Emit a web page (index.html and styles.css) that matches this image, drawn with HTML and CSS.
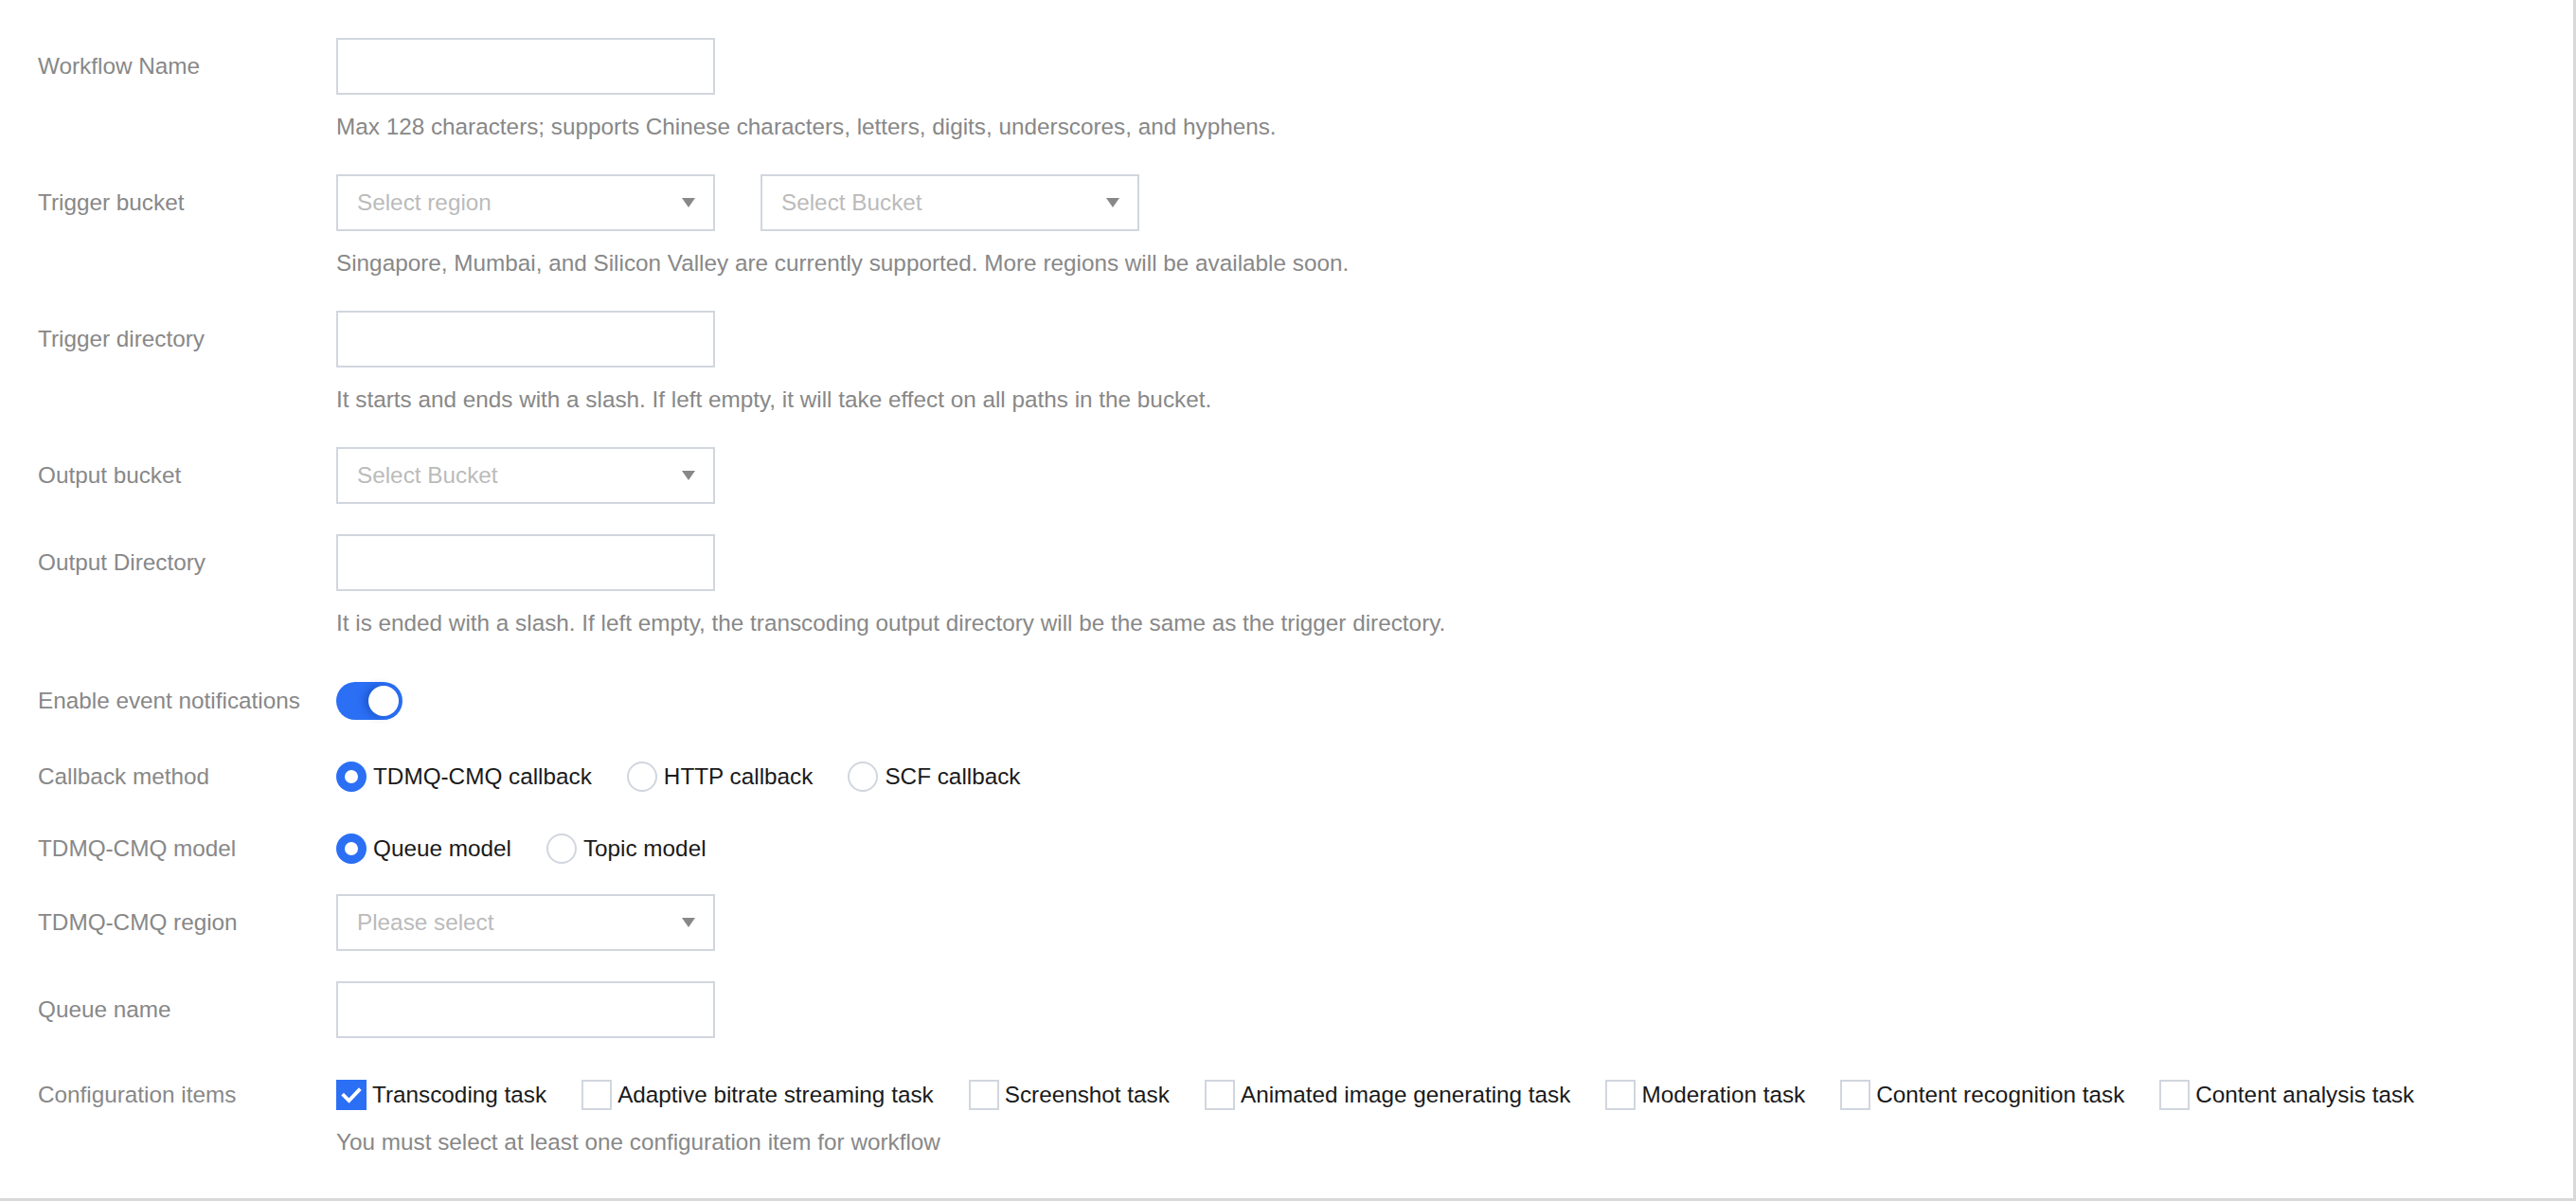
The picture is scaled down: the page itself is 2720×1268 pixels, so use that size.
FILE: index.html
```html
<!DOCTYPE html>
<html>
<head>
<meta charset="utf-8">
<link rel="stylesheet" href="styles.css">
</head>
<body>
<div class="page">
  <div class="form">
    <div class="item">
      <div class="label">Workflow Name</div>
      <div class="ctrl">
        <div class="line"><div class="input"></div></div>
        <div class="help">Max 128 characters; supports Chinese characters, letters, digits, underscores, and hyphens.</div>
      </div>
    </div>
    <div class="item">
      <div class="label">Trigger bucket</div>
      <div class="ctrl">
        <div class="line">
          <div class="input select"><span class="ph">Select region</span><span class="caret"></span></div>
          <div class="input select"><span class="ph">Select Bucket</span><span class="caret"></span></div>
        </div>
        <div class="help">Singapore, Mumbai, and Silicon Valley are currently supported. More regions will be available soon.</div>
      </div>
    </div>
    <div class="item">
      <div class="label">Trigger directory</div>
      <div class="ctrl">
        <div class="line"><div class="input"></div></div>
        <div class="help">It starts and ends with a slash. If left empty, it will take effect on all paths in the bucket.</div>
      </div>
    </div>
    <div class="item">
      <div class="label">Output bucket</div>
      <div class="ctrl">
        <div class="line"><div class="input select"><span class="ph">Select Bucket</span><span class="caret"></span></div></div>
      </div>
    </div>
    <div class="item">
      <div class="label">Output Directory</div>
      <div class="ctrl">
        <div class="line"><div class="input"></div></div>
        <div class="help">It is ended with a slash. If left empty, the transcoding output directory will be the same as the trigger directory.</div>
      </div>
    </div>
    <div class="item is-text is-switch">
      <div class="label">Enable event notifications</div>
      <div class="ctrl text-ctrl">
        <div class="switch"><span class="knob"></span></div>
      </div>
    </div>
    <div class="item is-text">
      <div class="label">Callback method</div>
      <div class="ctrl text-ctrl">
        <div class="choices">
          <label class="choice"><span class="radio checked"></span>TDMQ-CMQ callback</label>
          <label class="choice"><span class="radio"></span>HTTP callback</label>
          <label class="choice"><span class="radio"></span>SCF callback</label>
        </div>
      </div>
    </div>
    <div class="item is-text">
      <div class="label">TDMQ-CMQ model</div>
      <div class="ctrl text-ctrl">
        <div class="choices">
          <label class="choice"><span class="radio checked"></span>Queue model</label>
          <label class="choice"><span class="radio"></span>Topic model</label>
        </div>
      </div>
    </div>
    <div class="item">
      <div class="label">TDMQ-CMQ region</div>
      <div class="ctrl">
        <div class="line"><div class="input select"><span class="ph">Please select</span><span class="caret"></span></div></div>
      </div>
    </div>
    <div class="item">
      <div class="label">Queue name</div>
      <div class="ctrl">
        <div class="line"><div class="input"></div></div>
      </div>
    </div>
    <div class="item is-text">
      <div class="label">Configuration items</div>
      <div class="ctrl text-ctrl">
        <div class="choices">
          <label class="choice"><span class="check checked"><svg viewBox="0 0 32 32" width="32" height="32"><path d="M8 16.5 L13.5 22 L24 11" fill="none" stroke="#fff" stroke-width="3.8" stroke-linecap="square"/></svg></span>Transcoding task</label>
          <label class="choice"><span class="check"></span>Adaptive bitrate streaming task</label>
          <label class="choice"><span class="check"></span>Screenshot task</label>
          <label class="choice"><span class="check"></span>Animated image generating task</label>
          <label class="choice"><span class="check"></span>Moderation task</label>
          <label class="choice"><span class="check"></span>Content recognition task</label>
          <label class="choice"><span class="check"></span>Content analysis task</label>
        </div>
        <div class="help">You must select at least one configuration item for workflow</div>
      </div>
    </div>
  </div>
</div>
</body>
</html>
```

FILE: styles.css
```css
html, body {
  margin: 0;
  padding: 0;
  background: #fff;
}
body {
  font-family: "Liberation Sans", Arial, Helvetica, sans-serif;
  font-size: 24.3px;
  color: #1a1a1a;
}
.page {
  box-sizing: border-box;
  height: 1268px;
  border-right: 3px solid #d9d9d9;
  border-bottom: 3px solid #d9d9d9;
  padding: 40px 0 0 40px;
}
.form {
  display: flex;
  flex-direction: column;
}
.item {
  display: flex;
  align-items: flex-start;
  margin-bottom: 32px;
}
.label {
  width: 315px;
  flex: none;
  color: #888;
  line-height: 36px;
  padding-top: 12px;
}
.item.is-text .label {
  line-height: 32px;
}
.item.is-switch .label {
  line-height: 40px;
}
.ctrl {
  display: flex;
  flex-direction: column;
}
.text-ctrl {
  padding-top: 12px;
}
.line {
  display: flex;
  gap: 48px;
}
.input {
  box-sizing: border-box;
  width: 400px;
  height: 60px;
  border: 2px solid #d1d6de;
  background: #fff;
}
.select {
  display: flex;
  align-items: center;
  justify-content: space-between;
  padding: 0 19px 0 20px;
}
.ph {
  color: #bbb;
}
.caret {
  width: 0;
  height: 0;
  border-left: 7px solid transparent;
  border-right: 7px solid transparent;
  border-top: 10px solid #888;
}
.help {
  margin-top: 16px;
  line-height: 36px;
  color: #888;
}
.switch {
  box-sizing: border-box;
  width: 70px;
  height: 40px;
  border-radius: 20px;
  background: #2b6ff5;
  display: flex;
  align-items: center;
  justify-content: flex-end;
  padding-right: 4px;
}
.knob {
  width: 32px;
  height: 32px;
  border-radius: 50%;
  background: #fff;
  box-shadow: -4px 0 8px rgba(0, 40, 120, 0.35);
}
.choices {
  display: flex;
  align-items: center;
  height: 32px;
}
.choice {
  display: flex;
  align-items: center;
  margin-right: 37px;
  line-height: 32px;
  color: #1a1a1a;
}
.radio {
  box-sizing: border-box;
  width: 32px;
  height: 32px;
  border-radius: 50%;
  border: 2px solid #d1d6de;
  margin-right: 7px;
  flex: none;
  background: #fff;
}
.radio.checked {
  border: 9px solid #2b6ff5;
}
.check {
  box-sizing: border-box;
  width: 32px;
  height: 32px;
  border: 2px solid #d1d6de;
  margin-right: 6px;
  flex: none;
  background: #fff;
}
.check.checked {
  border: none;
  background: #2b6ff5;
}
.check svg {
  display: block;
}
```
